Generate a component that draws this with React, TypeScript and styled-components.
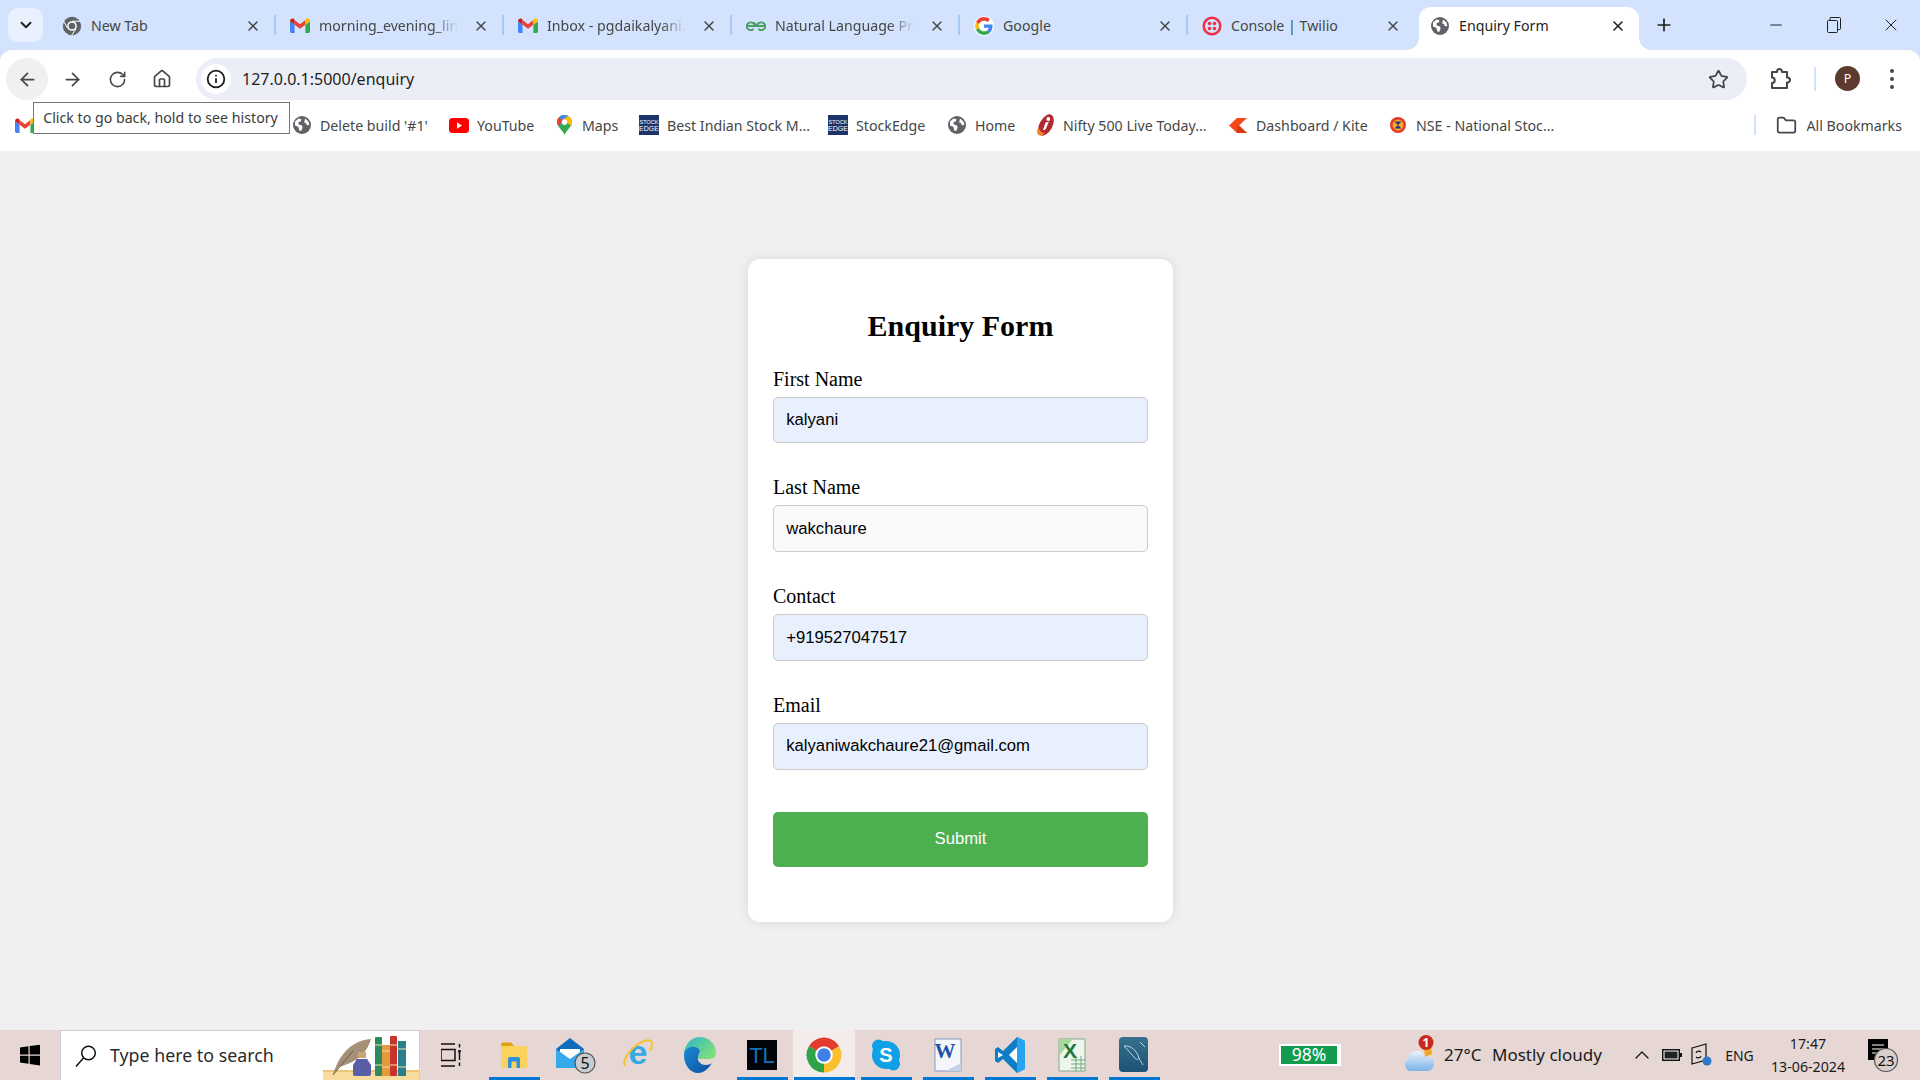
import React from 'react';
import styled, { createGlobalStyle } from 'styled-components';
import { ChevronDown, ArrowLeft, ArrowRight, RotateCw, House, Info, Star, X, Plus, Minus, Folder, ChevronUp } from 'lucide-react';

const UI = `"Noto Sans", "Open Sans", sans-serif`;
const SERIF = `"Liberation Serif", "Times New Roman", serif`;
const ARIAL = `"Liberation Sans", Arial, sans-serif`;

const Global = createGlobalStyle`
  html, body { margin: 0; padding: 0; background: #f0f0f0; }
  * { box-sizing: border-box; }
`;

const Shell = styled.div`
  position: relative; width: 1920px; height: 1080px; overflow: hidden;
  display: flex; flex-direction: column; background: #f0f0f0;
`;

/* ---------- tab strip ---------- */
const TabStrip = styled.div`
  height: 50px; flex: none; display: flex; align-items: flex-end;
  padding-left: 8px; background: #d3e3fd;
`;
const TabSearch = styled.div`
  width: 35px; height: 34px; margin: 0 5px 8px 0; border-radius: 10px; background: #e9f1fe;
  display: flex; align-items: center; justify-content: center; color: #1f1f1f;
`;
const Tab = styled.div<{ $active?: boolean }>`
  position: relative; height: 43px; flex: none; display: flex; align-items: center;
  width: ${p => (p.$active ? 220 : 226)}px;
  margin-left: ${p => (p.$active ? 5 : 0)}px;
  padding: 0 13px 6px ${p => (p.$active ? 11 : 14)}px;
  gap: 9px;
  border-radius: 12px 12px 0 0;
  background: ${p => (p.$active ? '#fff' : 'transparent')};
  ${p => p.$active && `
    &::before, &::after { content: ''; position: absolute; bottom: 0; width: 12px; height: 12px; }
    &::before { left: -12px; background: radial-gradient(circle at 0 0, transparent 11.5px, #fff 12px); }
    &::after { right: -12px; background: radial-gradient(circle at 100% 0, transparent 11.5px, #fff 12px); }
  `}
`;
const TabTitle = styled.span<{ $active?: boolean; $fade?: boolean }>`
  flex: 1; min-width: 0; overflow: hidden; white-space: nowrap;
  font: 14.2px ${UI}; color: ${p => (p.$active ? '#1f1f1f' : '#444746')};
  ${p => p.$fade && `
    margin-right: 6px;
    -webkit-mask-image: linear-gradient(to right, #000 82%, transparent 100%);
    mask-image: linear-gradient(to right, #000 82%, transparent 100%);
  `}
`;
const TabClose = styled.span<{ $active?: boolean }>`
  width: 16px; height: 16px; flex: none; display: flex; align-items: center; justify-content: center;
  color: ${p => (p.$active ? '#1f1f1f' : '#444746')};
`;
const TabSep = styled.div`
  width: 2px; height: 20px; margin-bottom: 15px; flex: none; background: #a8c7fa;
`;
const NewTab = styled.div`
  width: 20px; height: 20px; margin: 0 0 15px 15px; color: #1f1f1f;
  display: flex; align-items: center; justify-content: center;
`;
const WindowControls = styled.div`
  margin-left: auto; height: 50px; display: flex; color: #1f1f1f;
`;
const WinBtn = styled.div`
  width: 57.5px; height: 100%; display: flex; align-items: center; justify-content: center;
`;

/* ---------- toolbar ---------- */
const ToolbarWrap = styled.div`
  flex: none; background: #d3e3fd;
`;
const Toolbar = styled.div`
  height: 50px; flex: none; background: #fff; display: flex; align-items: flex-end;
  padding: 0 18px 0 6px;
  border-radius: 12px 12px 0 0;
`;
const NavGroup = styled.div`
  display: flex; gap: 3px; margin-right: 13px;
`;
const NavBtn = styled.div<{ $hover?: boolean }>`
  width: 42px; height: 42px; border-radius: 50%; color: #444746;
  background: ${p => (p.$hover ? '#f0f0f0' : 'transparent')};
  display: flex; align-items: center; justify-content: center;
`;
const Omnibox = styled.div`
  flex: 1; height: 42px; border-radius: 21px; background: #ebeef7;
  display: flex; align-items: center; padding: 0 18px 0 5px;
`;
const SiteInfo = styled.div`
  width: 30px; height: 30px; border-radius: 50%; background: #fff; margin-right: 11px; color: #1f1f1f;
  display: flex; align-items: center; justify-content: center; flex: none;
`;
const Url = styled.span`
  flex: 1; font: 16px ${UI}; color: #1f1f1f; white-space: nowrap;
`;
const ExtBtn = styled.div`
  width: 42px; height: 42px; margin-left: 12px; color: #444746;
  display: flex; align-items: center; justify-content: center;
`;
const ToolSep = styled.div`
  width: 2px; height: 24px; margin: 0 0 9px 13px; background: #d3e3fd;
`;
const Avatar = styled.div`
  width: 25px; height: 25px; border-radius: 50%; background: #5d3a2e; color: #fff; margin: 0 0 9px 19px;
  font: 12.5px ${UI}; display: flex; align-items: center; justify-content: center;
`;
const Kebab = styled.div`
  width: 20px; height: 42px; margin-left: 22px; display: flex; flex-direction: column;
  align-items: center; justify-content: center; gap: 4px;
  & > i { width: 4px; height: 4px; border-radius: 50%; background: #444746; display: block; }
`;

/* ---------- bookmarks ---------- */
const BookmarkBar = styled.div`
  height: 51px; flex: none; background: #fff; display: flex; align-items: center;
  padding: 0 18px 1px 15px;
`;
const Bookmark = styled.div<{ $w: number }>`
  width: ${p => p.$w}px; flex: none; display: flex; align-items: center; gap: 8px;
  font: 14.2px ${UI}; color: #444746; white-space: nowrap;
`;
const FavSlot = styled.span`
  width: 20px; height: 20px; flex: none; display: flex; align-items: center; justify-content: center;
`;
const BarSpacer = styled.div`flex: 1;`;
const BarSep = styled.div`
  width: 2px; height: 20px; background: #d3e3fd; margin-right: 20px;
`;
const AllBookmarks = styled.div`
  display: flex; align-items: center; gap: 10px; font: 14.2px ${UI}; color: #444746;
`;
const Tooltip = styled.div`
  position: absolute; left: 33px; top: 102px; width: 257px; height: 32px;
  background: #fff; border: 1px solid #767676; color: #3c3c3c; padding: 0 2px 2px 0;
  font: 14.2px ${UI}; display: flex; align-items: center; justify-content: center; white-space: nowrap;
`;

/* ---------- page ---------- */
const Main = styled.main`
  flex: 1; display: flex; align-items: center; justify-content: center; padding-left: 1px; background: #f0f0f0;
`;
const Card = styled.form`
  width: 425px; padding: 25px 25px 55px; background: #fff; border-radius: 12px;
  box-shadow: 0 0 12px rgba(0, 0, 0, 0.1);
`;
const Title = styled.h2`
  margin: 25px 0 24.7px; font: bold 30px/34px ${SERIF}; color: #000; text-align: center;
`;
const Group = styled.div`
  margin-bottom: 33px;
`;
const Label = styled.label`
  display: block; height: 23px; margin-bottom: 6px; font: 20px/23px ${SERIF}; color: #000;
`;
const Input = styled.input<{ $filled?: boolean }>`
  display: block; width: 100%; height: 46.75px; padding: 0 12.25px; margin: 0;
  border: 1.25px solid #ccc; border-radius: 5px; outline: none;
  background: ${p => (p.$filled ? '#e8f0fe' : '#f9f9f9')};
  font: 16.67px ${ARIAL}; color: #000;
`;
const Submit = styled.button`
  display: block; width: 100%; height: 55px; margin-top: 42.3px; border: 0; border-radius: 5px;
  background: #4caf50; color: #fff; font: 16.67px ${ARIAL};
`;

/* ---------- taskbar ---------- */
const Taskbar = styled.div`
  height: 50px; flex: none; display: flex; align-items: stretch; background: #e6d7d4; color: #1a1a1a;
`;
const StartBtn = styled.div`
  width: 60px; flex: none; display: flex; align-items: center; justify-content: center;
`;
const SearchBox = styled.div`
  width: 360px; flex: none; display: flex; align-items: center; background: #fff;
  border: 1px solid #cfcfcf; border-width: 1px 1px 0 1px; padding-left: 14px; overflow: hidden;
`;
const SearchText = styled.span`
  margin: 0 0 2px 13px; font: 17.8px ${UI}; color: #2b2b2b; white-space: nowrap;
`;
const SearchArt = styled.svg`
  margin-left: auto; flex: none; display: block;
`;
const TaskViewSlot = styled.div`
  width: 63px; flex: none; display: flex; align-items: center; justify-content: center;
`;
const AppSlot = styled.div<{ $running?: boolean; $active?: boolean }>`
  position: relative; width: 62px; flex: none; display: flex; align-items: center; justify-content: center;
  background: ${p => (p.$active ? '#f3ecea' : 'transparent')};
  ${p => p.$running && `
    &::after { content: ''; position: absolute; left: 6px; right: 5px; bottom: 0; height: 3px; background: #0078d4; }
  `}
  ${p => p.$active && `&::after { left: 1px; right: 0; }`}
`;
const TaskSpacer = styled.div`flex: 1;`;
const BatteryWidget = styled.div`
  width: 62px; height: 22px; align-self: center; flex: none; background: #109b4f; border: 2px solid #fff; border-right-width: 4px;
  color: #fff; font: 17.5px/17px ${UI}; text-align: center;
`;
const Weather = styled.div`
  margin: 0 25px 2px 63px; display: flex; align-items: center; flex: none;
`;
const Temp = styled.span`
  width: 48px; margin-left: 9px; font: 17px ${UI}; white-space: nowrap;
`;
const Condition = styled.span`
  width: 110px; font: 17px ${UI}; white-space: nowrap;
`;
const TraySlot = styled.div<{ $w: number }>`
  width: ${p => p.$w}px; flex: none; display: flex; align-items: center; justify-content: center;
  font: 14px ${UI}; white-space: nowrap;
`;
const Clock = styled.div`
  width: 92px; flex: none; display: flex; flex-direction: column; align-items: center; justify-content: center;
  font: 14.2px/23px ${UI};
`;
const NotifSlot = styled.div`
  width: 66px; flex: none; display: flex; align-items: center; padding-left: 14px;
`;

/* ---------- drawings ---------- */
const sector = (a0: number, a1: number, r = 22, c = 24) => {
  const p = (a: number) => `${c + r * Math.cos((a * Math.PI) / 180)} ${c - r * Math.sin((a * Math.PI) / 180)}`;
  return `M${c} ${c}L${p(a0)}A${r} ${r} 0 0 1 ${p(a1)}Z`;
};
const ChromeLogo = ({ s = 20 }: { s?: number }) => (
  <svg width={s} height={s} viewBox="0 0 48 48">
    <path d={sector(150, 30)} fill="#e33b2e" />
    <path d={sector(30, -90)} fill="#fbc02d" />
    <path d={sector(-90, -210)} fill="#2fa24a" />
    <circle cx="24" cy="24" r="11" fill="#fff" />
    <circle cx="24" cy="24" r="8.5" fill="#3f7fe8" />
  </svg>
);
const ChromeMono = () => (
  <svg width="20" height="20" viewBox="0 0 48 48">
    <circle cx="24" cy="24" r="22" fill="#5f6368" />
    <circle cx="24" cy="24" r="11.500" fill="#fff" />
    <circle cx="24" cy="24" r="8" fill="#5f6368" />
    <path d="M24 12.500h21M14 30L3.500 12M34 30L23.500 46" stroke="#fff" strokeWidth="2.400" fill="none" />
  </svg>
);
const Globe = () => (
  <svg width="20" height="20" viewBox="0 0 20 20">
    <circle cx="10" cy="10" r="9" fill="#5f6368" />
    <path d="M3 6.500l3.500-3 3 .8-.8 2.200-2.200.6.2 2.400 3 .7 1 2.400-1.600 3.400-1.800-.4-1-3.800L3 10.500zM13 3.500l3.500 3 .8 3.500-2.300.3-1.200-2.300-1.600-.5z" fill="#fff" />
  </svg>
);
const Gmail = () => (
  <svg width="20" height="15" viewBox="0 0 24 18">
    <path d="M0 4v12a2 2 0 002 2h3.500V8z" fill="#4285f4" />
    <path d="M24 4v12a2 2 0 01-2 2h-3.500V8z" fill="#34a853" />
    <path d="M5.500 8L12 13l6.500-5V2.500L12 7.500 5.500 2.500z" fill="#ea4335" />
    <path d="M0 3.500C0 1 2.800-.4 4.800 1.100l.7 1.400V8L0 4z" fill="#c5221f" />
    <path d="M24 3.500c0-2.500-2.800-3.900-4.800-2.400l-.7 1.400V8L24 4z" fill="#fbbc04" />
  </svg>
);
const GoogleG = () => (
  <svg width="20" height="20" viewBox="-3 -3 54 54">
    <circle cx="24" cy="24" r="27" fill="#fff" />
    <path fill="#EA4335" d="M24 9.500c3.540 0 6.710 1.220 9.210 3.600l6.850-6.850C35.900 2.380 30.470 0 24 0 14.620 0 6.510 5.380 2.560 13.220l7.980 6.190C12.430 13.720 17.740 9.500 24 9.500z" />
    <path fill="#4285F4" d="M46.980 24.550c0-1.570-.15-3.090-.38-4.550H24v9.020h12.940c-.58 2.960-2.260 5.480-4.780 7.180l7.730 6c4.510-4.180 7.090-10.360 7.090-17.650z" />
    <path fill="#FBBC05" d="M10.530 28.590c-.48-1.450-.76-2.990-.76-4.590s.27-3.140.76-4.590l-7.980-6.190C.92 16.460 0 20.120 0 24c0 3.880.92 7.540 2.560 10.780l7.970-6.190z" />
    <path fill="#34A853" d="M24 48c6.480 0 11.930-2.130 15.890-5.810l-7.730-6c-2.150 1.450-4.920 2.300-8.160 2.300-6.260 0-11.570-4.220-13.470-9.910l-7.980 6.190C6.510 42.620 14.620 48 24 48z" />
  </svg>
);
const GfgLogo = () => (
  <svg width="20" height="20" viewBox="0 0 20 20" fill="none" stroke="#4a9d63" strokeWidth="1.800">
    <path d="M1 10h18M9 10a4.200 3.800 0 10-1.300 3M11 10a4.200 3.800 0 111.300 3M7.500 6.500L11 10l1.500-3.500" />
  </svg>
);
const Twilio = () => (
  <svg width="20" height="20" viewBox="0 0 20 20">
    <circle cx="10" cy="10" r="8.300" fill="none" stroke="#f22f46" strokeWidth="2.600" />
    <g fill="#f22f46"><circle cx="7.500" cy="7.500" r="1.800" /><circle cx="12.500" cy="7.500" r="1.800" /><circle cx="7.500" cy="12.500" r="1.800" /><circle cx="12.500" cy="12.500" r="1.800" /></g>
  </svg>
);
const YouTube = () => (
  <svg width="20" height="15" viewBox="0 0 20 15">
    <rect width="20" height="15" rx="3.500" fill="#f00" />
    <path d="M8 4.300l5 3.200-5 3.200z" fill="#fff" />
  </svg>
);
const MapsPin = () => (
  <svg width="15" height="22" viewBox="0 0 15 20">
    <path d="M7.500 20C6.500 16 0 12 0 7.300 0 3.300 3.300 0 7.500 0S15 3.300 15 7.300C15 12 8.500 16 7.500 20z" fill="#34a853" />
    <path d="M2 2.300A7.400 7.400 0 017.500 0c1.300 0 2.700.4 3.700 1L2 11z" fill="#4285f4" />
    <path d="M11.200 1A7.400 7.400 0 0115 7.300c0 1.300-.4 2.300-1 3.300L5 5z" fill="#fbbc04" />
    <path d="M0 7.300c0-2 .7-3.700 2-5l3.300 3.200L2 11C.8 9.800 0 8.700 0 7.300z" fill="#ea4335" />
    <circle cx="7.500" cy="7.300" r="2.700" fill="#fff" />
  </svg>
);
const StockEdge = () => (
  <svg width="20" height="20" viewBox="0 0 20 20">
    <rect width="20" height="20" fill="#1c3468" />
    <text x="10" y="8.500" textAnchor="middle" fontSize="5.500" fill="#fff" fontFamily="Liberation Sans">STOCK</text>
    <text x="10" y="16" textAnchor="middle" fontSize="7" fill="#fff" fontFamily="Liberation Sans">EDGE</text>
  </svg>
);
const Icici = () => (
  <svg width="19" height="22" viewBox="0 0 19 22">
    <ellipse cx="10" cy="11" rx="6.500" ry="11.500" transform="rotate(28 10 11)" fill="#b02a30" />
    <path d="M2.500 13.500C0 17 1 21.500 4.500 21.500c1.500 0 3-1 4.500-2.500C6 19 3.500 17 2.500 13.500z" fill="#f58220" />
    <circle cx="12.300" cy="5" r="1.900" fill="#fff" />
    <path d="M9.500 8.500l3.300-.7L9.800 15c-.8.800-1.800 1.200-2.800 1.200z" fill="#fff" />
  </svg>
);
const Kite = () => (
  <svg width="18" height="15" viewBox="0 0 18 15">
    <path d="M8 0h10L10 7.500 18 15H8L0 7.500z" fill="#f6461a" />
    <path d="M8 7.500l2 0 8 7.500H8z" fill="#d93a12" />
  </svg>
);
const Nse = () => (
  <svg width="18" height="20" viewBox="0 0 18 20">
    <circle cx="9" cy="10" r="8" fill="#e2382a" />
    <circle cx="9" cy="10" r="5.500" fill="#f7a823" />
    <path d="M5.500 6.500h7l-7 7h7z" fill="#27348b" />
  </svg>
);
const Extension = () => (
  <svg width="22" height="24" viewBox="0 0 22 24" fill="none" stroke="#444746" strokeWidth="2" strokeLinejoin="round">
    <path d="M3 5h5V4.500a2.500 2.500 0 015 0V5h5v5.500h.5a2.500 2.500 0 010 5H18V21H3v-5a2.500 2.500 0 000-5.500z" />
  </svg>
);
const MaxIcon = () => (
  <svg width="14" height="16" viewBox="0 0 14 16" fill="none" stroke="#1f1f1f" strokeWidth="1">
    <rect x=".5" y="3.500" width="10" height="12" rx="1" />
    <path d="M3 3.500V1.500A1 1 0 014 .5h8.500a1 1 0 011 1v10a1 1 0 01-1 1h-2" />
  </svg>
);
const Windows = () => (
  <svg width="22" height="22" viewBox="0 0 22 22" fill="#000">
    <path d="M1 3.500l8.500-1.200V10.500H1zM10.700 2.100L21 .7v9.800H10.700zM1 11.700h8.500v8L1 18.500zM10.700 11.700H21v9.700l-10.300-1.500z" />
  </svg>
);
const SearchGlass = () => (
  <svg width="22" height="24" viewBox="0 0 22 24" fill="none" stroke="#111" strokeWidth="1.500">
    <circle cx="13.500" cy="9" r="6.800" /><path d="M8.500 14L1 22.500" />
  </svg>
);
const TaskView = () => (
  <svg width="21" height="24" viewBox="0 0 21 24" fill="none" stroke="#111" strokeWidth="1.500">
    <path d="M0 1h14M0 23h14M0 6.500h14v11H0zM18.500 1v3.500M18.500 7v10M18.500 19.500V23" />
    <rect x="17.300" y="7" width="2.400" height="2.400" fill="#111" stroke="none" />
  </svg>
);
const Explorer = () => (
  <svg width="28" height="28" viewBox="0 0 28 28">
    <path d="M1 3a1.500 1.500 0 011.500-1.500H11L14 5H1z" fill="#e0a010" />
    <rect x="1" y="5" width="26" height="22" rx="1" fill="#fbd35c" />
    <path d="M8 27v-9a2 2 0 012-2h8a2 2 0 012 2v9h-3.500v-6.500h-5V27z" fill="#2f8fe0" />
  </svg>
);
const Mail = () => (
  <svg width="42" height="38" viewBox="0 0 42 38">
    <path d="M1 13L15 2l14 11v17H1z" fill="#0f6cbd" />
    <path d="M5 13h20v9L15 27 5 22z" fill="#fff" />
    <path d="M1 13l14 10 14-10v19H1z" fill="#35a9ec" />
    <circle cx="30" cy="27" r="10" fill="#c8ccd0" stroke="#555" strokeWidth="1.200" />
    <text x="30" y="33" textAnchor="middle" fontSize="16" fill="#111" fontFamily="Noto Sans">5</text>
  </svg>
);
const IE = () => (
  <svg width="32" height="34" viewBox="0 0 32 34">
    <text x="16" y="26" textAnchor="middle" fontSize="34" fontWeight="700" fill="#36a9e6" fontFamily="Liberation Sans">e</text>
    <path d="M3 28C0 22 9 9 20 4c6-3 10-2 10 2 0 3-1 5-2 7" fill="none" stroke="#f3c233" strokeWidth="2" />
  </svg>
);
const Edge = () => (
  <svg width="32" height="36" viewBox="0 0 32 36">
    <defs>
      <linearGradient id="edgeG" x1="0" y1="0" x2="1" y2=".7"><stop offset="0" stopColor="#2fb5c9" /><stop offset="1" stopColor="#7fe07a" /></linearGradient>
      <linearGradient id="edgeB" x1="0" y1="0" x2="1" y2="1"><stop offset="0" stopColor="#1a8ad4" /><stop offset="1" stopColor="#0b4f9e" /></linearGradient>
    </defs>
    <path d="M16 0c9 0 16 7 16 16 0 5-4 6-8 6h-8c-2 0-3-2-1-4 3-3-2-8-8-7C4 12 1 15 0 18 0 8 7 0 16 0z" fill="url(#edgeG)" />
    <path d="M0 18c0-5 5-9 10-8 5 0 7 4 5 7-3 5 0 11 7 11 2 0 5-1 6-2-3 5-8 10-14 10C6 36 0 28 0 18z" fill="url(#edgeB)" />
  </svg>
);
const TlIcon = () => (
  <svg width="30" height="30" viewBox="0 0 30 30">
    <rect width="30" height="30" fill="#010408" />
    <text x="15" y="23" textAnchor="middle" fontSize="22" fill="#1272b8" fontFamily="Liberation Sans">TL</text>
  </svg>
);
const Skype = () => (
  <svg width="30" height="34" viewBox="0 0 30 34">
    <circle cx="15" cy="17" r="14" fill="#0fa0e6" />
    <circle cx="7.500" cy="8" r="6.500" fill="#0fa0e6" /><circle cx="22.500" cy="26" r="6.500" fill="#0fa0e6" />
    <text x="15" y="24" textAnchor="middle" fontSize="20" fontWeight="700" fill="#fff" fontFamily="Liberation Sans">S</text>
  </svg>
);
const Word = () => (
  <svg width="28" height="34" viewBox="0 0 28 34">
    <path d="M1 1h26v32H1z" fill="#f4f6fb" stroke="#8299c4" />
    <path d="M12 33l15-8v8z" fill="#c3d2ec" />
    <text x="11" y="20" textAnchor="middle" fontSize="21" fontWeight="700" fill="#1d50a8" fontFamily="Liberation Serif">W</text>
  </svg>
);
const VSCode = () => (
  <svg width="30" height="36" viewBox="0 0 30 36">
    <path d="M22 0l8 4v28l-8 4L8 22l-5 4-3-2v-12l3-2 5 4z" fill="#0f7cc6" />
    <path d="M22 0l8 4v28l-8 4z" fill="#28a3ee" />
    <path d="M3 15l5 3-5 3zM22 10l-8 8 8 8z" fill="#fff" />
  </svg>
);
const Excel = () => (
  <svg width="28" height="34" viewBox="0 0 28 34">
    <path d="M1 1h26v32H1z" fill="#eef6ec" stroke="#7fa98a" />
    <path d="M1 1h14L1 18z" fill="#a8d8a0" />
    <path d="M13 22h14M13 26h14M13 30h14M18 18v15M23 18v15" stroke="#6fa97c" fill="none" />
    <text x="12" y="20" textAnchor="middle" fontSize="21" fontWeight="700" fill="#1d7a3a" fontFamily="Liberation Sans">X</text>
  </svg>
);
const MySql = () => (
  <svg width="30" height="36" viewBox="0 0 30 36">
    <defs><linearGradient id="myG" x1="0" y1="0" x2="0" y2="1"><stop offset="0" stopColor="#37708f" /><stop offset="1" stopColor="#1c5275" /></linearGradient></defs>
    <rect width="29" height="35" rx="4" fill="url(#myG)" />
    <path d="M5 9c7-1 13 5 15 12 1 3 3 5 4 7M20 21c-2 2-3 2-5-1-3-3-5-6-10-11M21 5l5 5" fill="none" stroke="#bcd4e2" strokeWidth="1" />
  </svg>
);
const TrayBattery = () => (
  <svg width="20" height="12" viewBox="0 0 20 12">
    <rect x=".75" y=".75" width="16.500" height="10.500" fill="#fff" stroke="#111" strokeWidth="1.500" />
    <rect x="2.500" y="2.500" width="13" height="7" fill="#222" />
    <rect x="18" y="4" width="2" height="4" fill="#111" />
  </svg>
);
const TrayNet = () => (
  <svg width="22" height="24" viewBox="0 0 22 24">
    <path d="M1 5l14-4v16l-14 4z" fill="none" stroke="#111" strokeWidth="1.200" />
    <path d="M5 10a3 3 0 015-1M10 13a3 3 0 01-5 1" fill="none" stroke="#111" strokeWidth="1.200" />
    <circle cx="16" cy="18" r="4.500" fill="#2a78c8" />
  </svg>
);
const Cloud = () => (
  <svg width="31" height="38" viewBox="0 0 31 38">
    <defs><linearGradient id="cl" x1="0" y1="0" x2="0" y2="1"><stop offset="0" stopColor="#eaf3fc" /><stop offset="1" stopColor="#7cb3e8" /></linearGradient></defs>
    <path d="M20 12l7-1 1 8-7 3z" fill="#f5a623" />
    <path d="M6 36a6 6 0 01-2-11c1-6 5-10 11-9 3 1 5 3 6 6 5-1 9 2 9 7 0 4-3 7-7 7z" fill="url(#cl)" />
    <circle cx="22" cy="7.500" r="7.500" fill="#c9281c" />
    <text x="22" y="12" textAnchor="middle" fontSize="12" fontWeight="700" fill="#fff" fontFamily="Noto Sans">1</text>
  </svg>
);
const Notif = () => (
  <svg width="34" height="36" viewBox="0 0 34 36">
    <rect x="0" y="2" width="20" height="21" fill="#000" />
    <path d="M4 8h12M4 12h12M4 16h12" stroke="#fff" strokeWidth="1.200" />
    <circle cx="18" cy="23" r="11.500" fill="#d8cfcd" stroke="#555" strokeWidth="1.200" />
    <text x="18" y="29" textAnchor="middle" fontSize="15" fill="#111" fontFamily="Noto Sans">23</text>
  </svg>
);

const tabs: { icon: React.ReactNode; title: string; fade?: boolean }[] = [
  { icon: <ChromeMono />, title: 'New Tab' },
  { icon: <Gmail />, title: 'morning_evening_link - kalyani', fade: true },
  { icon: <Gmail />, title: 'Inbox - pgdaikalyani.wakchaure', fade: true },
  { icon: <GfgLogo />, title: 'Natural Language Processing', fade: true },
  { icon: <GoogleG />, title: 'Google' },
  { icon: <Twilio />, title: 'Console | Twilio' },
];

const bookmarks: { icon?: React.ReactNode; label?: string; w: number }[] = [
  { icon: <Gmail />, w: 86 },
  { icon: <svg width="20" height="20" viewBox="0 0 20 20"><rect x="1" y="1" width="18" height="18" fill="#4a90e2" /></svg>, w: 191 },
  { icon: <Globe />, label: "Delete build '#1'", w: 157 },
  { icon: <YouTube />, label: 'YouTube', w: 105 },
  { icon: <MapsPin />, label: 'Maps', w: 85 },
  { icon: <StockEdge />, label: 'Best Indian Stock M...', w: 189 },
  { icon: <StockEdge />, label: 'StockEdge', w: 119 },
  { icon: <Globe />, label: 'Home', w: 88 },
  { icon: <Icici />, label: 'Nifty 500 Live Today...', w: 193 },
  { icon: <Kite />, label: 'Dashboard / Kite', w: 160 },
  { icon: <Nse />, label: 'NSE - National Stoc...', w: 190 },
];

const fields = [
  { id: 'first', label: 'First Name', value: 'kalyani', filled: true },
  { id: 'last', label: 'Last Name', value: 'wakchaure', filled: false },
  { id: 'contact', label: 'Contact', value: '+919527047517', filled: true },
  { id: 'email', label: 'Email', value: 'kalyaniwakchaure21@gmail.com', filled: true },
];

const apps: { node: React.ReactNode; running?: boolean; active?: boolean }[] = [
  { node: <Explorer />, running: true },
  { node: <Mail /> },
  { node: <IE /> },
  { node: <Edge /> },
  { node: <TlIcon />, running: true },
  { node: <ChromeLogo s={38} />, running: true, active: true },
  { node: <Skype />, running: true },
  { node: <Word />, running: true },
  { node: <VSCode />, running: true },
  { node: <Excel />, running: true },
  { node: <MySql />, running: true },
];

export default function App() {
  return (
    <Shell>
      <Global />
      <TabStrip>
        <TabSearch><ChevronDown size={18} strokeWidth={2.5} /></TabSearch>
        {tabs.map(t => (
          <React.Fragment key={t.title}>
            <Tab>
              <FavSlot>{t.icon}</FavSlot>
              <TabTitle $fade={t.fade}>{t.title}</TabTitle>
              <TabClose><X size={16} strokeWidth={2.2} /></TabClose>
            </Tab>
            {t.title !== 'Console | Twilio' && <TabSep />}
          </React.Fragment>
        ))}
        <Tab $active>
          <FavSlot><Globe /></FavSlot>
          <TabTitle $active>Enquiry Form</TabTitle>
          <TabClose $active><X size={16} strokeWidth={2.4} /></TabClose>
        </Tab>
        <NewTab><Plus size={20} strokeWidth={2} /></NewTab>
        <WindowControls>
          <WinBtn><Minus size={18} strokeWidth={1.3} /></WinBtn>
          <WinBtn><MaxIcon /></WinBtn>
          <WinBtn><X size={20} strokeWidth={1.2} /></WinBtn>
        </WindowControls>
      </TabStrip>

      <ToolbarWrap>
        <Toolbar>
          <NavGroup>
            <NavBtn $hover><ArrowLeft size={21} strokeWidth={2} /></NavBtn>
            <NavBtn><ArrowRight size={21} strokeWidth={2} /></NavBtn>
            <NavBtn><RotateCw size={19} strokeWidth={2} /></NavBtn>
            <NavBtn><House size={20} strokeWidth={2} /></NavBtn>
          </NavGroup>
          <Omnibox>
            <SiteInfo><Info size={20} strokeWidth={2.2} /></SiteInfo>
            <Url>127.0.0.1:5000/enquiry</Url>
            <Star size={21} strokeWidth={2} color="#444746" />
          </Omnibox>
          <ExtBtn><Extension /></ExtBtn>
          <ToolSep />
          <Avatar>P</Avatar>
          <Kebab><i /><i /><i /></Kebab>
        </Toolbar>
      </ToolbarWrap>

      <BookmarkBar>
        {bookmarks.map((b, i) => (
          <Bookmark key={i} $w={b.w}>
            <FavSlot>{b.icon}</FavSlot>
            {b.label}
          </Bookmark>
        ))}
        <BarSpacer />
        <BarSep />
        <AllBookmarks><Folder size={21} strokeWidth={2} />All Bookmarks</AllBookmarks>
      </BookmarkBar>

      <Tooltip>Click to go back, hold to see history</Tooltip>

      <Main>
        <Card onSubmit={e => e.preventDefault()}>
          <Title>Enquiry Form</Title>
          {fields.map(f => (
            <Group key={f.id}>
              <Label htmlFor={f.id}>{f.label}</Label>
              <Input id={f.id} readOnly value={f.value} $filled={f.filled} />
            </Group>
          ))}
          <Submit type="submit">Submit</Submit>
        </Card>
      </Main>

      <Taskbar>
        <StartBtn><Windows /></StartBtn>
        <SearchBox>
          <SearchGlass />
          <SearchText>Type here to search</SearchText>
          <SearchArt width="96" height="49" viewBox="0 0 96 49">
            <rect x="0" y="39" width="96" height="10" fill="#f8dc9e" />
            <rect x="0" y="39" width="96" height="2" fill="#ecc678" />
            <path d="M10 44C14 30 24 10 48 8 44 22 34 30 22 34l-6 2z" fill="#a58f76" />
            <path d="M10 44L30 20" stroke="#6b5a48" strokeWidth="1" />
            <rect x="35" y="21" width="8" height="6" fill="#c9a77a" />
            <path d="M34 28h10l4 6v9a2 2 0 01-2 2H32a2 2 0 01-2-2v-9z" fill="#5a5fa5" />
            <rect x="52" y="6" width="7" height="39" rx="1" fill="#2d8a5e" />
            <rect x="59" y="14" width="8" height="31" fill="#e39a3b" />
            <rect x="67" y="5" width="7" height="40" rx="1" fill="#c8342c" />
            <rect x="75" y="10" width="8" height="35" fill="#2a7f8a" />
            <path d="M52 14h7M52 34h7M59 20h8M59 36h8M67 14h7M67 34h7M75 18h8M75 36h8" stroke="#f3e2b0" strokeWidth="1" />
          </SearchArt>
        </SearchBox>
        <TaskViewSlot><TaskView /></TaskViewSlot>
        {apps.map((a, i) => (
          <AppSlot key={i} $running={a.running} $active={a.active}>{a.node}</AppSlot>
        ))}
        <TaskSpacer />
        <BatteryWidget>98%</BatteryWidget>
        <Weather>
          <Cloud />
          <Temp>27°C</Temp>
          <Condition>Mostly cloudy</Condition>
        </Weather>
        <TraySlot $w={30}><ChevronUp size={24} strokeWidth={1.4} /></TraySlot>
        <TraySlot $w={30}><TrayBattery /></TraySlot>
        <TraySlot $w={30}><TrayNet /></TraySlot>
        <TraySlot $w={45}>ENG</TraySlot>
        <Clock><span>17:47</span><span>13-06-2024</span></Clock>
        <NotifSlot><Notif /></NotifSlot>
      </Taskbar>
    </Shell>
  );
}
